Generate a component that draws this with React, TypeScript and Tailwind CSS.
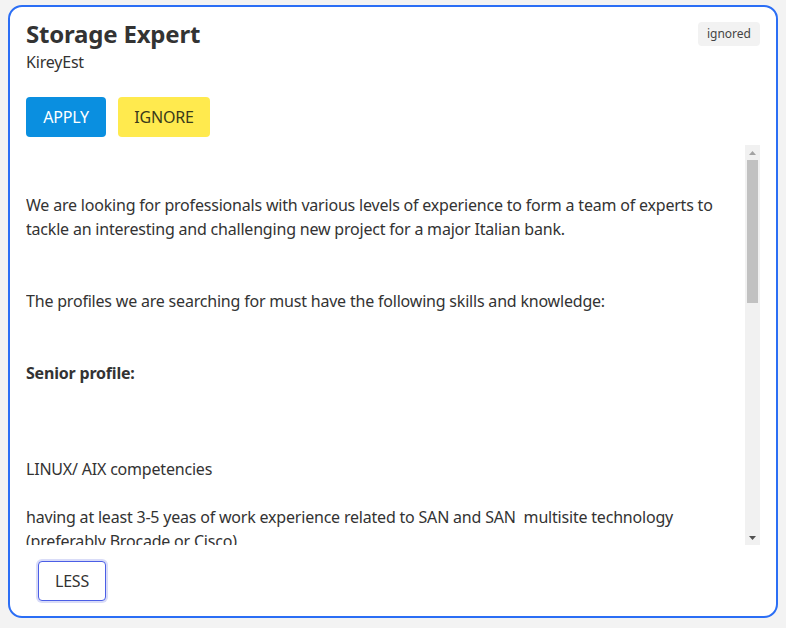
function ScrollBar() {
    return (
        <div className="flex h-full w-[15px] shrink-0 flex-col items-center bg-[#f1f1f1]">
            <div className="flex h-[15px] w-full items-center justify-center">
                <svg width="7" height="4" viewBox="0 0 7 4">
                    <path d="M0 4 L3.5 0 L7 4 Z" fill="#a3a3a3" />
                </svg>
            </div>
            <div className="h-[143px] w-[11px] bg-[#c1c1c1]" />
            <div className="flex-1" />
            <div className="flex h-[15px] w-full items-center justify-center">
                <svg width="7" height="4" viewBox="0 0 7 4">
                    <path d="M0 0 L7 0 L3.5 4 Z" fill="#505050" />
                </svg>
            </div>
        </div>
    );
}

export default function App() {
    return (
        <div
            className="min-h-screen bg-[#f3f3f3] px-2 pt-[5px] pb-[10px] text-[#333333] tracking-[-0.2px]"
            style={{ fontFamily: '"Noto Sans", "Open Sans", sans-serif' }}
        >
            <div className="relative rounded-[14px] border-2 border-[#2b6ef5] bg-white px-4 pt-[11px] pb-[15px]">
                <span className="absolute right-4 top-[15px] rounded bg-[#f2f2f2] px-[9px] py-[4px] text-xs tracking-normal text-[#444]">
                    ignored
                </span>
                <h1 className="text-2xl font-bold leading-8 text-[#333]">Storage Expert</h1>
                <div className="text-base leading-6">KireyEst</div>
                <div className="mt-[23px] flex gap-3">
                    <button className="h-10 w-20 rounded bg-[#0a8fe0] text-base text-white">APPLY</button>
                    <button className="h-10 w-[92px] rounded bg-[#ffea4e] text-base text-[#3a3a1a]">IGNORE</button>
                </div>
                <div className="mt-2 flex h-[400px]">
                    <div className="flex-1 overflow-hidden pr-4 text-base leading-6">
                        <p className="pt-12">
                            We are looking for professionals with various levels of experience to form a team of experts to
                            tackle an interesting and challenging new project for a major Italian bank.
                        </p>
                        <p className="mt-12">The profiles we are searching for must have the following skills and knowledge:</p>
                        <p className="mt-12 font-bold">Senior profile:</p>
                        <p className="mt-[72px]">LINUX/ AIX competencies</p>
                        <p className="mt-6">
                            having at least 3-5 yeas of work experience related to SAN and SAN&nbsp; multisite technology
                            (preferably Brocade or Cisco)
                        </p>
                        <p className="mt-6">
                            Knowledge of storage systems (IBM, EMC, HDS, NetApp) and replication / backup solutions
                        </p>
                    </div>
                    <ScrollBar />
                </div>
                <div className="mt-4 pl-3">
                    <button className="h-10 w-[68px] rounded border border-[#4b5ee6] bg-white text-base text-[#333] ring-2 ring-[#d9dcf8]">
                        LESS
                    </button>
                </div>
            </div>
        </div>
    );
}
